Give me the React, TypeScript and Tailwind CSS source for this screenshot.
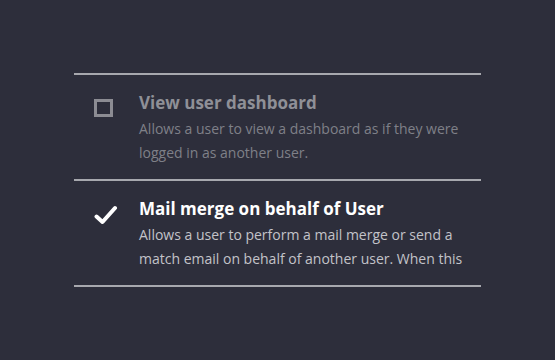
import React from 'react';

const items = [
  {
    id: 'dashboard',
    title: 'View user dashboard',
    desc: 'Allows a user to view a dashboard as if they were logged in as another user.',
    checked: false,
  },
  {
    id: 'mailmerge',
    title: 'Mail merge on behalf of User',
    desc: 'Allows a user to perform a mail merge or send a match email on behalf of another user. When this',
    checked: true,
  },
];

const CheckIcon = () => (
  <svg width="24" height="20" viewBox="0 0 24 20" fill="none">
    <path d="M2.5 11.5 L8.5 17 L21 3" stroke="#ffffff" strokeWidth="4" strokeLinecap="round" strokeLinejoin="round" />
  </svg>
);

export default function App() {
  return (
    <div className="w-[555px] h-[360px] bg-[#2d2e3b] pt-[73px] pl-[74px]" style={{ fontFamily: '"Open Sans", "Liberation Sans", sans-serif' }}>
      <div className="w-[407px] border-b-2 border-[#a7a8ae]">
        {items.map((item) => (
          <div key={item.id} className="flex border-t-2 border-[#a7a8ae] h-[106px] pt-[16px]">
            <div className="w-[65px] flex justify-start pl-[20px]">
              {item.checked ? (
                <div className="mt-[8px]">
                  <CheckIcon />
                </div>
              ) : (
                <div className="mt-[8px] w-[19px] h-[18px] border-[3px] border-[#8c8c93]" />
              )}
            </div>
            <div className="flex-1 pr-1">
              <div className={`text-[17px] leading-[24px] font-bold ${item.checked ? 'text-white' : 'text-[#8f9097]'}`}>
                {item.title}
              </div>
              <p className={`mt-[2px] text-[14px] leading-[24px] ${item.checked ? 'text-[#c3c3c9]' : 'text-[#7f8088]'}`}>
                {item.desc}
              </p>
            </div>
          </div>
        ))}
      </div>
    </div>
  );
}
